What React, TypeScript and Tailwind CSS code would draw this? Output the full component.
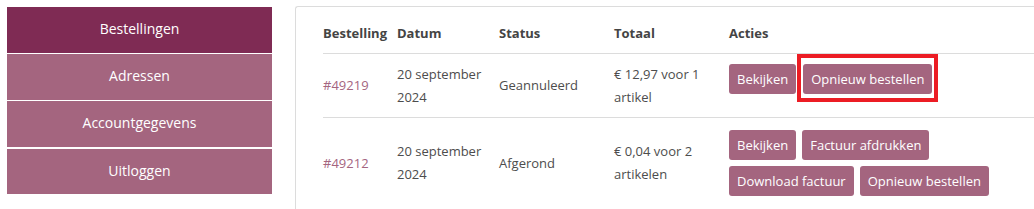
import React from 'react'

const navItems = ['Bestellingen', 'Adressen', 'Accountgegevens', 'Uitloggen']

function ActionButton({ label }: { label: string }) {
  return (
    <span className="inline-flex h-[30px] items-center rounded-[3px] bg-[#a4657f] px-[8px] text-[13px] leading-none text-white">
      {label}
    </span>
  )
}

export default function App() {
  return (
    <div className="flex h-[209px] w-[1034px] overflow-hidden bg-white font-['Open_Sans',sans-serif] text-[13px] text-[#4d4d4d]">
      <nav className="ml-[7px] mt-[7px] flex w-[265px] shrink-0 flex-col gap-px self-start">
        {navItems.map((item, i) => (
          <a
            key={item}
            className={`flex items-center justify-center pb-[3px] text-[14px] text-white ${
              i === 0 ? 'bg-[#7f2b54]' : 'bg-[#a4657f]'
            } ${i === 3 ? 'mt-px h-[45px]' : 'h-[46px]'}`}
          >
            {item}
          </a>
        ))}
      </nav>

      <section className="ml-[23px] mt-[6px] w-[800px] shrink-0 rounded-tl-[3px] border-l border-t border-[#dcdcdc] pl-[27px]">
        <div className="flex h-[47px] border-b border-[#dcdcdc] pt-[15px] font-bold leading-[23px] text-[#444]">
          <div className="w-[74px]">Bestelling</div>
          <div className="w-[102px]">Datum</div>
          <div className="w-[115px]">Status</div>
          <div className="w-[115px]">Totaal</div>
          <div>Acties</div>
        </div>

        <div className="flex h-[64px] border-b border-[#dcdcdc] leading-[23px]">
          <div className="flex w-[74px] items-center text-[#a4657f]">#49219</div>
          <div className="flex w-[102px] items-center">
            20 september
            <br />
            2024
          </div>
          <div className="flex w-[115px] items-center">Geannuleerd</div>
          <div className="flex w-[115px] items-center">
            € 12,97 voor 1
            <br />
            artikel
          </div>
          <div className="flex items-start gap-[7px] pt-[10px]">
            <ActionButton label="Bekijken" />
            <span className="relative inline-flex">
              <ActionButton label="Opnieuw bestellen" />
              <span className="pointer-events-none absolute -bottom-[8px] -left-[6px] -right-[6px] -top-[10px] border-4 border-[#ec1c24]" />
            </span>
          </div>
        </div>

        <div className="flex h-[90px] leading-[23px]">
          <div className="flex w-[74px] items-center text-[#a4657f]">#49212</div>
          <div className="flex w-[102px] items-center">
            20 september
            <br />
            2024
          </div>
          <div className="flex w-[115px] items-center">Afgerond</div>
          <div className="flex w-[115px] items-center">
            € 0,04 voor 2
            <br />
            artikelen
          </div>
          <div className="flex w-[270px] flex-wrap content-start gap-x-[6px] gap-y-[6px] pt-[12px]">
            <ActionButton label="Bekijken" />
            <ActionButton label="Factuur afdrukken" />
            <ActionButton label="Download factuur" />
            <ActionButton label="Opnieuw bestellen" />
          </div>
        </div>
      </section>
    </div>
  )
}
